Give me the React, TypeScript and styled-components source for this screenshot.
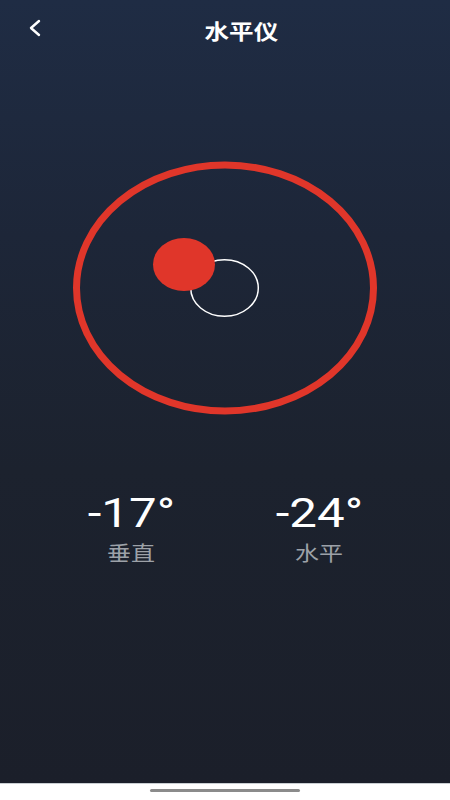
import styled, { createGlobalStyle } from "styled-components";

const GlobalStyle = createGlobalStyle`
  html, body {
    margin: 0;
    padding: 0;
    background: #ffffff;
  }
  * {
    box-sizing: border-box;
  }
`;

const Page = styled.div`
  width: 450px;
  height: 800px;
  display: flex;
  flex-direction: column;
  overflow: hidden;
`;

const Screen = styled.div`
  height: 783px;
  display: flex;
  flex-direction: column;
  background: linear-gradient(180deg, #1f2c44 0%, #1d2638 30%, #1c222e 60%, #1b1f2a 100%);
`;

const Header = styled.div`
  height: 56px;
  display: grid;
  grid-template-columns: 60px 1fr 60px;
  align-items: center;
`;

const BackButton = styled.button`
  margin-left: 28px;
  padding: 0;
  border: none;
  background: none;
  display: flex;
  justify-self: start;
  cursor: pointer;
`;

const Title = styled.h1`
  margin: 4px 0 0;
  padding-left: 28px;
  text-align: center;
  font-family: "Noto Sans CJK SC", "Noto Sans", sans-serif;
  font-size: 21px;
  line-height: 1;
  font-weight: 700;
  color: #ffffff;
  transform: scaleX(1.17);
`;

const Level = styled.svg`
  display: block;
  margin: 102px 0 0 70px;
`;

const Readings = styled.div`
  margin: 71px 0 0 37px;
  width: 376px;
  display: grid;
  grid-template-columns: 1fr 1fr;
`;

const Reading = styled.div`
  display: flex;
  flex-direction: column;
  align-items: center;
`;

const Value = styled.div`
  font-family: Roboto, "Liberation Sans", sans-serif;
  font-size: 41px;
  line-height: 48px;
  color: #ffffff;
  transform: scaleX(1.2);
`;

const Label = styled.div`
  margin-top: 6px;
  font-family: "Noto Sans CJK SC", "Noto Sans", sans-serif;
  font-size: 20px;
  line-height: 20px;
  color: #9da1a8;
  transform: scaleX(1.2);
`;

const HomeArea = styled.div`
  flex: 1;
  background: #ffffff;
  border-top: 1px solid #c9ced2;
  display: flex;
  justify-content: center;
  padding-top: 5px;
`;

const HomeIndicator = styled.div`
  width: 150px;
  height: 3px;
  border-radius: 2px;
  background: #8b8b8b;
`;

const readings = [
  { value: "-17°", label: "垂直" },
  { value: "-24°", label: "水平" },
];

const App = () => {
  return (
    <Page>
      <GlobalStyle />
      <Screen>
        <Header>
          <BackButton aria-label="返回">
            <svg width="14" height="18" viewBox="0 0 14 18">
              <polyline
                points="11,2 3,9 11,16"
                fill="none"
                stroke="#ffffff"
                strokeWidth="2.4"
                strokeLinecap="round"
                strokeLinejoin="round"
              />
            </svg>
          </BackButton>
          <Title>水平仪</Title>
          <span />
        </Header>

        <Level width="310" height="260" viewBox="0 0 310 260">
          <ellipse cx="155" cy="130" rx="148.5" ry="123" fill="none" stroke="#e0362a" strokeWidth="7" />
          <ellipse cx="154.5" cy="130" rx="33.8" ry="28.3" fill="none" stroke="#ffffff" strokeWidth="1.5" />
          <ellipse cx="114" cy="106.5" rx="31" ry="26.5" fill="#e0362a" />
        </Level>

        <Readings>
          {readings.map((r) => (
            <Reading key={r.label}>
              <Value>{r.value}</Value>
              <Label>{r.label}</Label>
            </Reading>
          ))}
        </Readings>
      </Screen>
      <HomeArea>
        <HomeIndicator />
      </HomeArea>
    </Page>
  );
};

export default App;
